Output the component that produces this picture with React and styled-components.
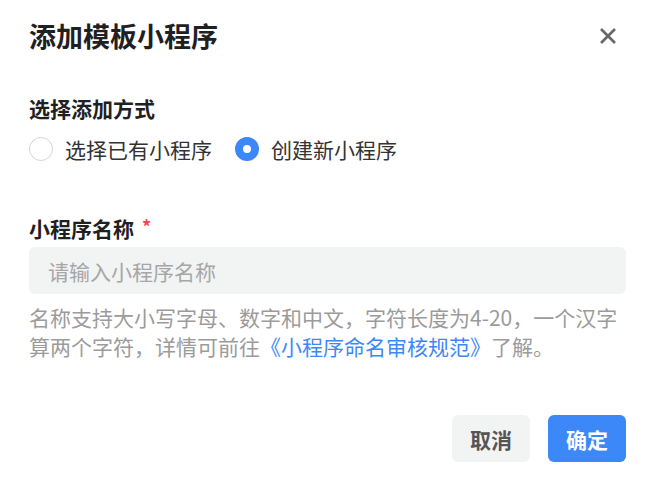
import React from 'react';
import styled, { createGlobalStyle } from 'styled-components';

const GlobalStyle = createGlobalStyle`
  html, body {
    margin: 0;
    padding: 0;
    background: #ffffff;
  }
  body {
    font-family: "Noto Sans CJK SC", "Noto Sans", sans-serif;
    color: #222;
  }
`;

const Dialog = styled.div`
  width: 656px;
  height: 478px;
  box-sizing: border-box;
  padding: 17px 30px 0 29px;
  display: flex;
  flex-direction: column;
  background: #fff;
`;

const Header = styled.div`
  display: flex;
  align-items: center;
  justify-content: space-between;
  height: 38px;
`;

const Title = styled.h1`
  margin: 0;
  font-size: 27px;
  line-height: 38px;
  font-weight: 700;
  color: #1f2022;
`;

const CloseButton = styled.button`
  width: 36px;
  height: 36px;
  padding: 0;
  border: none;
  background: transparent;
  display: flex;
  align-items: center;
  justify-content: center;
  cursor: pointer;
`;

const SectionLabel = styled.div`
  margin-top: 38px;
  font-size: 21px;
  line-height: 30px;
  font-weight: 700;
  color: #1f2022;
`;

const RadioGroup = styled.div`
  margin-top: 11px;
  display: flex;
  align-items: center;
  gap: 23px;
  height: 30px;
`;

const RadioOption = styled.label`
  display: flex;
  align-items: center;
  gap: 12px;
  font-size: 21px;
  line-height: 30px;
  color: #333;
  cursor: pointer;
`;

const RadioDot = styled.span`
  width: 24px;
  height: 24px;
  box-sizing: border-box;
  border-radius: 50%;
  border: ${(p) => (p.checked ? '8px solid #3d88f9' : '1.5px solid #d4d4d4')};
  background: #fff;
  flex-shrink: 0;
`;

const FieldLabel = styled.div`
  margin-top: 49px;
  font-size: 21px;
  line-height: 30px;
  font-weight: 700;
  color: #1f2022;
  display: flex;
  align-items: flex-start;
`;

const Required = styled.span`
  margin-left: 8px;
  color: #f5474b;
  font-size: 18px;
  line-height: 26px;
  font-weight: 700;
`;

const TextInput = styled.input`
  margin-top: 4px;
  height: 47px;
  box-sizing: border-box;
  width: 100%;
  border: none;
  outline: none;
  border-radius: 6px;
  background: #f2f3f3;
  padding: 0 19px;
  font-family: "Noto Sans CJK SC", "Noto Sans", sans-serif;
  font-size: 21px;
  color: #333;

  &::placeholder {
    color: #a6a6a6;
  }
`;

const Hint = styled.p`
  margin: 9px 0 0;
  font-size: 21px;
  line-height: 29px;
  color: #9b9b9b;
`;

const Link = styled.a`
  color: #3d88f9;
  text-decoration: none;
`;

const Footer = styled.div`
  margin-top: 54px;
  display: flex;
  justify-content: flex-end;
  gap: 18px;
`;

const Button = styled.button`
  width: 78px;
  height: 47px;
  border: none;
  border-radius: 6px;
  font-family: "Noto Sans CJK SC", "Noto Sans", sans-serif;
  font-size: 21px;
  font-weight: 700;
  background: ${(p) => (p.primary ? '#3d88f9' : '#f2f3f3')};
  color: ${(p) => (p.primary ? '#fff' : '#555')};
  cursor: pointer;
  padding: 0;
`;

const CloseIcon = () => (
  <svg width="18" height="18" viewBox="0 0 18 18">
    <path d="M2 2 L16 16 M16 2 L2 16" stroke="#666" strokeWidth="2.6" strokeLinecap="butt" />
  </svg>
);

const App = () => {
  return (
    <>
      <GlobalStyle />
      <Dialog>
        <Header>
          <Title>添加模板小程序</Title>
          <CloseButton aria-label="关闭">
            <CloseIcon />
          </CloseButton>
        </Header>

        <SectionLabel>选择添加方式</SectionLabel>
        <RadioGroup>
          <RadioOption>
            <RadioDot />
            选择已有小程序
          </RadioOption>
          <RadioOption>
            <RadioDot checked />
            创建新小程序
          </RadioOption>
        </RadioGroup>

        <FieldLabel>
          小程序名称
          <Required>*</Required>
        </FieldLabel>
        <TextInput placeholder="请输入小程序名称" />
        <Hint>
          名称支持大小写字母、数字和中文，字符长度为4-20，一个汉字算两个字符，详情可前往
          <Link href="#">《小程序命名审核规范》</Link>
          了解。
        </Hint>

        <Footer>
          <Button>取消</Button>
          <Button primary>确定</Button>
        </Footer>
      </Dialog>
    </>
  );
};

export default App;
